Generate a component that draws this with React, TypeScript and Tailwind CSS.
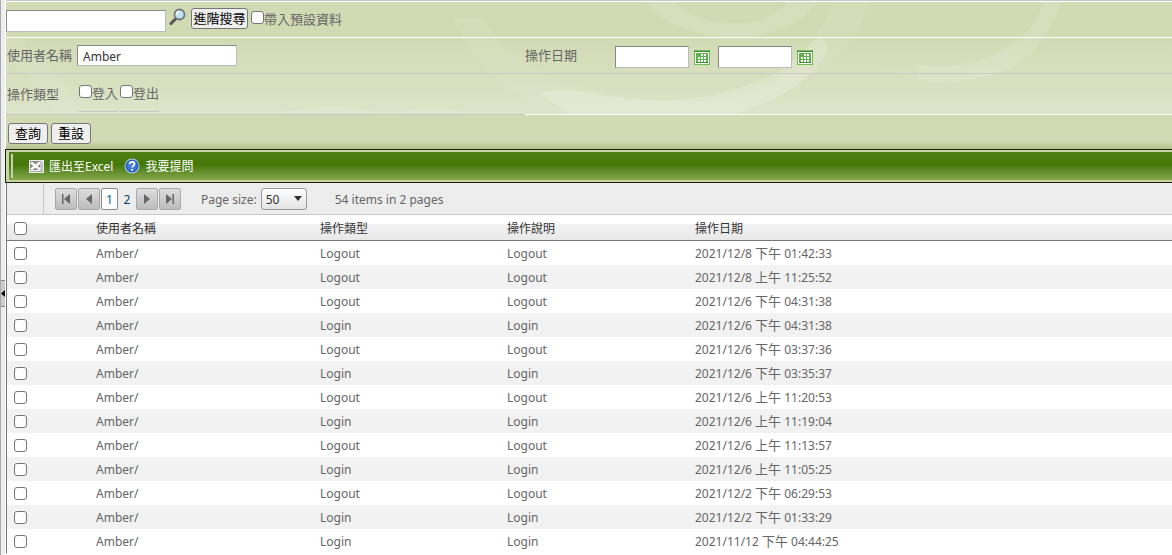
import { useState } from 'react';

interface LogRow {
  type: string;
  day: string;
  period: '上午' | '下午';
  time: string;
}

const rows: LogRow[] = [
  { type: 'Logout', day: '2021/12/8', period: '下午', time: '01:42:33' },
  { type: 'Logout', day: '2021/12/8', period: '上午', time: '11:25:52' },
  { type: 'Logout', day: '2021/12/6', period: '下午', time: '04:31:38' },
  { type: 'Login', day: '2021/12/6', period: '下午', time: '04:31:38' },
  { type: 'Logout', day: '2021/12/6', period: '下午', time: '03:37:36' },
  { type: 'Login', day: '2021/12/6', period: '下午', time: '03:35:37' },
  { type: 'Logout', day: '2021/12/6', period: '上午', time: '11:20:53' },
  { type: 'Login', day: '2021/12/6', period: '上午', time: '11:19:04' },
  { type: 'Logout', day: '2021/12/6', period: '上午', time: '11:13:57' },
  { type: 'Login', day: '2021/12/6', period: '上午', time: '11:05:25' },
  { type: 'Logout', day: '2021/12/2', period: '下午', time: '06:29:53' },
  { type: 'Login', day: '2021/12/2', period: '下午', time: '01:33:29' },
  { type: 'Login', day: '2021/11/12', period: '下午', time: '04:44:25' },
];

const inputClass =
  'block border border-t-[#888] border-l-[#888] border-r-[#bbb] border-b-[#bbb] bg-white text-[12px] text-[#333] outline-none';
const buttonClass =
  'h-[21px] shrink-0 rounded-[3px] border border-[#767676] bg-[#efefef] text-[13px] leading-[19px] text-black whitespace-nowrap';
const checkboxClass =
  'block size-[13px] shrink-0 appearance-none rounded-[3px] border border-[#767676] bg-white checked:bg-[#0075ff]';
const cellClass = 'p-0 pt-[2px] pl-1';
const headClass = 'border-b border-[#777] p-0 pt-[2px] pl-1 font-normal';

function Swirls() {
  return (
    <svg className="pointer-events-none absolute inset-0 h-full w-full" aria-hidden="true">
      <g fill="#fff">
        <path opacity=".12" d="M639 0C652 18 680 34 725 37C765 37 800 20 812 0H782C765 20 745 24 715 22C690 18 675 10 668 0Z" />
        <path opacity=".06" d="M447 16C465 65 510 100 560 113H730C800 90 850 50 865 0H828C805 50 780 78 735 95C680 106 620 102 565 84C520 66 495 45 474 16Z" />
        <path opacity=".17" d="M533 92C570 84 590 96 640 99C690 102 735 90 774 70L812 36C826 40 826 50 806 72C780 96 745 108 728 113H565Z" />
        <path opacity=".13" d="M911 64C940 68 975 64 1000 46C1020 36 1032 20 1038 0H1055C1046 28 1032 50 1010 64C985 78 945 84 911 78Z" />
        <path opacity=".06" d="M868 64C890 67 900 66 911 64V78C895 76 880 71 868 64Z" />
        <path opacity=".08" d="M1 37H18L22 50C45 62 55 76 62 90L75 113H50C34 95 30 76 1 62Z" />
        <path opacity=".12" d="M390 113C405 105 440 104 460 113Z M270 113C310 103 350 104 372 113Z" />
      </g>
    </svg>
  );
}

function MagnifierIcon() {
  return (
    <svg width="18" height="18" viewBox="0 0 18 18" aria-hidden="true">
      <path d="M2 15.500L6.500 11" stroke="#555" strokeWidth="3" strokeLinecap="round" />
      <circle cx="10.500" cy="6.500" r="5" fill="#b9e2f5" stroke="#777" strokeWidth="1.800" />
      <path d="M7.500 7a3 3 0 0 1 3-3.500" stroke="#fff" strokeWidth="1.600" fill="none" />
    </svg>
  );
}

function CalendarIcon() {
  return (
    <svg width="16" height="15" viewBox="0 0 16 15" shapeRendering="crispEdges" aria-hidden="true">
      <path d="M0 0H16V15H0Z" fill="#6ebd59" />
      <path d="M0 1H16V2H0Z" fill="#3f8f2d" />
      <path d="M1 2H15V14H1Z" fill="#fff" />
      <path d="M2 3H14V13H2Z" fill="#62b04d" />
      <path d="M2 12H14V13H2Z" fill="#3f8f2d" />
      <path
        d="M7 4h2v2H7zM10 4h2v2h-2zM4 7h2v2H4zM7 7h2v2H7zM10 7h2v2h-2zM4 10h2v2H4zM7 10h2v2H7zM10 10h2v2h-2z"
        fill="#fff"
      />
    </svg>
  );
}

function ExcelIcon() {
  return (
    <svg width="15" height="13" viewBox="0 0 15 13" aria-hidden="true">
      <path d="M0 0H15V13H0Z" fill="#eee" />
      <path d="M1 1H12V10H1Z" fill="#8a8a8a" />
      <path d="M11 2H14V11H11Z" fill="#c4c4c4" />
      <path d="M2 2.500L11 9.500M11 2.500L2 9.500" stroke="#fff" strokeWidth="2.400" />
      <path d="M1 11.500H14" stroke="#aaa" />
    </svg>
  );
}

function HelpIcon() {
  return (
    <svg width="16" height="16" viewBox="0 0 16 16" aria-hidden="true">
      <circle cx="8" cy="8" r="7.500" fill="#b8cdf0" />
      <circle cx="8" cy="8" r="6.500" fill="#2159b8" />
      <circle cx="8" cy="8" r="5" fill="#3f7ad6" />
      <path d="M5.600 6.200C5.600 3 10.500 3 10.500 6C10.500 7.800 8.100 7.900 8.100 9.600" fill="none" stroke="#fff" strokeWidth="1.800" />
      <circle cx="8.100" cy="12" r="1.100" fill="#fff" />
    </svg>
  );
}

function PagerButton({ label, path }: { label: string; path: string }) {
  return (
    <button
      aria-label={label}
      className="flex size-[22px] items-center justify-center rounded-[2px] border border-[#aaa] bg-linear-to-b from-[#dedede] to-[#bcbcbc]"
    >
      <svg width="10" height="10" viewBox="0 0 10 10" aria-hidden="true">
        <path d={path} fill="#666" />
      </svg>
    </button>
  );
}

export default function App() {
  const [keyword, setKeyword] = useState('');
  const [userName, setUserName] = useState('Amber');
  const [dateFrom, setDateFrom] = useState('');
  const [dateTo, setDateTo] = useState('');

  return (
    <div className="flex h-screen overflow-hidden bg-white font-['Noto_Sans','Noto_Sans_CJK_TC',sans-serif] text-[13px] text-[#666]">
      {/* Splitter */}
      <div className="flex w-[5px] shrink-0 flex-col border-l border-[#aaa] bg-[#eee] pt-[280px]">
        <button
          aria-label="Collapse"
          className="flex h-[27px] w-full items-center justify-center border-y border-[#888] bg-[#ccc]"
        >
          <svg width="4" height="7" viewBox="0 0 4 7" aria-hidden="true">
            <path d="M4 0V7L0 3.500Z" fill="#000" />
          </svg>
        </button>
      </div>

      <main className="min-w-0 flex-1">
        {/* Search form */}
        <form className="relative ml-px border-t border-[#c8c8c8] bg-[#d2dab4]" onSubmit={(e) => e.preventDefault()}>
          <div className="absolute inset-x-0 top-9 h-[77px] bg-linear-to-b from-[#d2dab4] to-[#dde4c9]" />
          <Swirls />
          <div className="relative">
            <div className="flex h-[37px] items-start border-y border-white pt-[6px]">
              <input
                aria-label="搜尋"
                value={keyword}
                onChange={(e) => setKeyword(e.target.value)}
                className={`${inputClass} mt-[2px] h-[22px] w-[160px] px-1`}
              />
              <button aria-label="搜尋" className="ml-[3px]">
                <MagnifierIcon />
              </button>
              <button className={`${buttonClass} ml-1 w-[57px]`}>進階搜尋</button>
              <label className="ml-[3px] flex items-start">
                <input type="checkbox" className={`${checkboxClass} mt-[3px]`} />
                <span className="leading-[22px]">帶入預設資料</span>
              </label>
            </div>

            <div className="flex h-9 items-start border-b border-[#c8c8c8] pt-[7px]">
              <div className="flex w-[519px] shrink-0 items-start">
                <label htmlFor="userName" className="w-[71px] pl-px leading-[20px]">
                  使用者名稱
                </label>
                <input
                  id="userName"
                  value={userName}
                  onChange={(e) => setUserName(e.target.value)}
                  className={`${inputClass} h-[21px] w-[160px] px-[5px] pt-[2px]`}
                />
              </div>
              <label htmlFor="dateFrom" className="w-[90px] shrink-0 leading-[20px]">
                操作日期
              </label>
              <input
                id="dateFrom"
                value={dateFrom}
                onChange={(e) => setDateFrom(e.target.value)}
                className={`${inputClass} mt-px h-[22px] w-[74px] px-1`}
              />
              <button aria-label="開始日期" className="mt-[5px] ml-[5px]">
                <CalendarIcon />
              </button>
              <input
                aria-label="結束日期"
                value={dateTo}
                onChange={(e) => setDateTo(e.target.value)}
                className={`${inputClass} mt-px ml-2 h-[22px] w-[74px] px-1`}
              />
              <button aria-label="結束日期" className="mt-[5px] ml-[5px]">
                <CalendarIcon />
              </button>
            </div>

            <div className="flex h-[41px]">
              <div className="flex w-[519px] items-start border-b border-[#c8c8c8]">
                <span className="w-[73px] pt-[9px] pl-px leading-[22px]">操作類型</span>
                <label className="flex h-[38px] items-start border-b border-[#c8c8c8] pt-[9px]">
                  <input type="checkbox" className={`${checkboxClass} mt-[2px]`} />
                  <span className="leading-[20px]">登入</span>
                </label>
                <label className="ml-[2px] flex h-[38px] items-start border-b border-[#c8c8c8] pt-[9px]">
                  <input type="checkbox" className={`${checkboxClass} mt-[2px]`} />
                  <span className="leading-[20px]">登出</span>
                </label>
              </div>
              <div className="flex-1 border-b border-white" />
            </div>

            <div className="flex h-[34px] gap-[3px] bg-linear-to-b from-[#d2dab4] from-75% to-[#b8c08c] pt-2 pl-[2px]">
              <button className={`${buttonClass} w-10`}>查詢</button>
              <button type="reset" className={`${buttonClass} w-10`}>
                重設
              </button>
            </div>
          </div>
        </form>

        {/* Toolbar */}
        <div className="border border-r-0 border-[#1b2313] bg-[#c9d3a8] py-[2px] pl-[3px]">
          <div className="flex h-7 items-center bg-linear-to-b from-[#4f8015] via-[#447806] via-45% to-[#86a84a] text-[12px] text-white">
            <span className="ml-[2px] h-6 w-[2px] bg-[#c5d3ac]" />
            <button className="ml-4 flex items-center gap-[5px]">
              <ExcelIcon />
              <span className="pt-[2px]">匯出至Excel</span>
            </button>
            <button className="ml-[11px] flex items-center gap-[5px]">
              <HelpIcon />
              <span className="pt-[2px]">我要提問</span>
            </button>
          </div>
        </div>

        {/* Grid */}
        <section className="ml-px border-l border-[#777]">
          <div className="flex h-8 items-center border-b border-[#c8c8c8] bg-[#ededed]">
            <span className="h-full w-[37px] border-r border-[#c8c8c8]" />
            <nav aria-label="Pager" className="ml-[11px] flex items-center gap-px text-[12px]">
              <PagerButton label="First" path="M1 0h1.500v10H1zM9 0v10L3 5z" />
              <PagerButton label="Previous" path="M8 0v10L2 5z" />
              <a href="#1" className="flex h-[22px] w-[17px] items-center justify-center rounded-[2px] border border-[#888] bg-white pt-[2px] text-[#0063a0]">
                1
              </a>
              <a href="#2" className="w-4 pt-[2px] text-center text-[#003f70]">
                2
              </a>
              <PagerButton label="Next" path="M2 0v10l6-5z" />
              <PagerButton label="Last" path="M1 0v10l6-5zM7.500 0H9v10H7.500z" />
            </nav>
            <label className="ml-5 flex items-center gap-1 text-[12px]">
              <span className="pt-[2px]">Page size:</span>
              <span className="relative">
                <select className="block h-[22px] w-[46px] appearance-none rounded-[3px] border border-[#999] bg-linear-to-b from-white to-[#e4e4e4] pt-[2px] pl-1 text-[12px] text-[#333]">
                  <option>50</option>
                  <option>20</option>
                </select>
                <svg className="pointer-events-none absolute top-2 right-[5px]" width="8" height="5" viewBox="0 0 8 5" aria-hidden="true">
                  <path d="M0 0H8L4 5Z" fill="#333" />
                </svg>
              </span>
            </label>
            <span className="ml-7 pt-[2px] text-[12px]">54 items in 2 pages</span>
          </div>

          <table className="w-full table-fixed border-separate border-spacing-0 text-left text-[12px] leading-[20px]">
            <colgroup>
              <col className="w-[85px]" />
              <col className="w-[224px]" />
              <col className="w-[187px]" />
              <col className="w-[188px]" />
              <col />
            </colgroup>
            <thead>
              <tr className="h-[26px] bg-linear-to-b from-white from-35% via-[#f2f2f2] via-35% to-[#e8e8e8] text-[#333]">
                <th className="border-b border-[#777] p-0 pt-[2px] pl-[7px]">
                  <input type="checkbox" aria-label="全選" className={checkboxClass} />
                </th>
                <th className={headClass}>使用者名稱</th>
                <th className={headClass}>操作類型</th>
                <th className={headClass}>操作說明</th>
                <th className={headClass}>操作日期</th>
              </tr>
            </thead>
            <tbody>
              {rows.map((row, i) => (
                <tr key={i} className="h-6 odd:bg-white even:bg-[#f2f2f2]">
                  <td className="p-0 pt-px pl-[7px]">
                    <input type="checkbox" aria-label={`${row.day} ${row.time}`} className={checkboxClass} />
                  </td>
                  <td className={cellClass}>Amber/</td>
                  <td className={cellClass}>{row.type}</td>
                  <td className={cellClass}>{row.type}</td>
                  <td className={cellClass}>
                    {row.day} <span className="text-[13px] leading-none">{row.period}</span> {row.time}
                  </td>
                </tr>
              ))}
            </tbody>
          </table>
        </section>
      </main>
    </div>
  );
}
